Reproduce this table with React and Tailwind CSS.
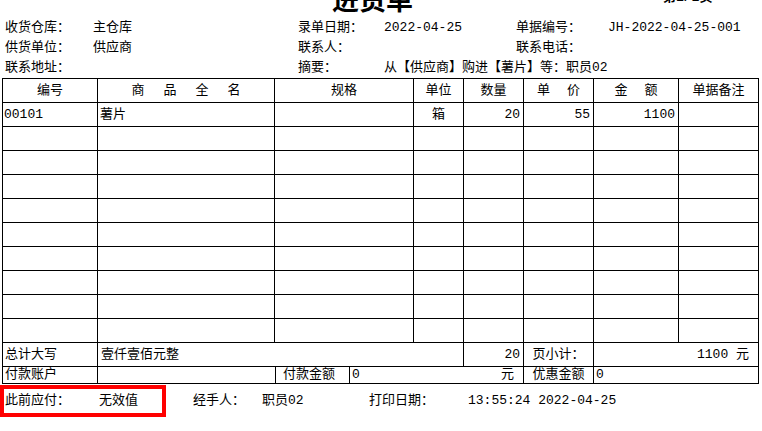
import React from "react";

// column widths (each includes its right border line)
const COLS = [
  "w-[95px]",
  "w-[177px]",
  "w-[139px]",
  "w-[50px]",
  "w-[60px]",
  "w-[70px]",
  "w-[85px]",
  "w-[80px]",
];

const cell = "h-full flex items-center border-r border-black shrink-0";

function Spaced({ chars, gap }) {
  return (
    <span className={`flex ${gap}`}>
      {chars.split("").map((c, i) => (
        <span key={i}>{c}</span>
      ))}
    </span>
  );
}

function HeaderRow() {
  const heads = [
    "编号",
    <Spaced key="n" chars="商品全名" gap="gap-[19px]" />,
    "规格",
    "单位",
    "数量",
    <Spaced key="p" chars="单价" gap="gap-[17px]" />,
    <Spaced key="a" chars="金额" gap="gap-[17px]" />,
    "单据备注",
  ];
  return (
    <div className="flex h-[24px] border-b border-black">
      {heads.map((h, i) => (
        <div key={i} className={`${COLS[i]} ${cell} justify-center`}>
          {h}
        </div>
      ))}
    </div>
  );
}

function DataRow({ item }) {
  return (
    <div className="flex h-[24px] border-b border-black">
      <div className={`${COLS[0]} ${cell} pl-[1px]`}>{item?.code}</div>
      <div className={`${COLS[1]} ${cell} pl-[2px]`}>{item?.name}</div>
      <div className={`${COLS[2]} ${cell}`}></div>
      <div className={`${COLS[3]} ${cell} justify-center`}>{item?.unit}</div>
      <div className={`${COLS[4]} ${cell} justify-end pr-[3px]`}>{item?.qty}</div>
      <div className={`${COLS[5]} ${cell} justify-end pr-[3px]`}>{item?.price}</div>
      <div className={`${COLS[6]} ${cell} justify-end pr-[3px]`}>{item?.amount}</div>
      <div className={`${COLS[7]} ${cell}`}></div>
    </div>
  );
}

function InfoRow({ items }) {
  return (
    <div className="flex h-[20px] items-center leading-[20px] pl-[5px]">
      {items.map(([w, t], i) => (
        <span key={i} className={`${w} shrink-0 whitespace-nowrap`}>
          {t}
        </span>
      ))}
    </div>
  );
}

export default function App() {
  const rows = [
    { code: "00101", name: "薯片", unit: "箱", qty: "20", price: "55", amount: "1100" },
    null, null, null, null, null, null, null, null, null,
  ];

  return (
    <div className="w-[762px] h-[431px] bg-white text-black overflow-hidden text-[13px] leading-[20px] font-['Liberation_Mono','Noto_Sans_CJK_SC',monospace]">
      {/* title, mostly cut off at the top */}
      <div className="flex h-[18px] items-start">
        <div className="ml-[332px] -mt-[15px] text-[27px] leading-[27px] font-bold font-['Noto_Sans_CJK_SC',sans-serif]">
          进货单
        </div>
        <div className="ml-[250px] -mt-[9px] text-[13px] leading-[13px] font-bold">
          第1/1页
        </div>
      </div>

      <InfoRow
        items={[
          ["w-[88px]", "收货仓库："],
          ["w-[205px]", "主仓库"],
          ["w-[86px]", "录单日期："],
          ["w-[132px]", "2022-04-25"],
          ["w-[92px]", "单据编号："],
          ["w-[150px]", "JH-2022-04-25-001"],
        ]}
      />
      <InfoRow
        items={[
          ["w-[88px]", "供货单位："],
          ["w-[205px]", "供应商"],
          ["w-[86px]", "联系人："],
          ["w-[132px]", ""],
          ["w-[92px]", "联系电话："],
          ["w-[150px]", ""],
        ]}
      />
      <InfoRow
        items={[
          ["w-[88px]", "联系地址："],
          ["w-[205px]", ""],
          ["w-[86px]", "摘要："],
          ["w-[300px]", "从【供应商】购进【薯片】等：职员02"],
        ]}
      />

      {/* table */}
      <div className="ml-[2px] w-[757px] border-l border-t border-black">
        <HeaderRow />
        {rows.map((r, i) => (
          <DataRow key={i} item={r} />
        ))}

        <div className="flex h-[24px] border-b border-black">
          <div className={`${COLS[0]} ${cell} pl-[2px]`}>总计大写</div>
          <div className={`w-[366px] ${cell} pl-[3px]`}>壹仟壹佰元整</div>
          <div className={`${COLS[4]} ${cell} justify-end pr-[3px]`}>20</div>
          <div className={`${COLS[5]} ${cell} justify-center`}>页小计：</div>
          <div className={`w-[165px] ${cell} justify-end pr-[9px]`}>1100 元</div>
        </div>

        <div className="flex h-[17px] border-b border-black leading-[16px]">
          <div className={`${COLS[0]} ${cell} pl-[2px]`}>付款账户</div>
          <div className={`w-[178px] ${cell}`}></div>
          <div className={`w-[74px] ${cell} pl-[7px]`}>付款金额</div>
          <div className={`w-[174px] ${cell} justify-between pl-[2px] pr-[9px]`}>
            <span>0</span>
            <span>元</span>
          </div>
          <div className={`${COLS[5]} ${cell} justify-center`}>优惠金额</div>
          <div className={`w-[165px] ${cell} pl-[2px]`}>0</div>
        </div>
      </div>

      {/* footer */}
      <div className="flex items-center mt-[1px]">
        <div className="w-[166px] h-[32px] border-4 border-[#ff0000] flex items-center pl-[1px]">
          <span className="w-[94px] shrink-0">此前应付：</span>
          <span>无效值</span>
        </div>
        <span className="ml-[27px] w-[69px] shrink-0">经手人：</span>
        <span className="w-[107px] shrink-0">职员02</span>
        <span className="w-[99px] shrink-0">打印日期：</span>
        <span>13:55:24 2022-04-25</span>
      </div>
    </div>
  );
}
